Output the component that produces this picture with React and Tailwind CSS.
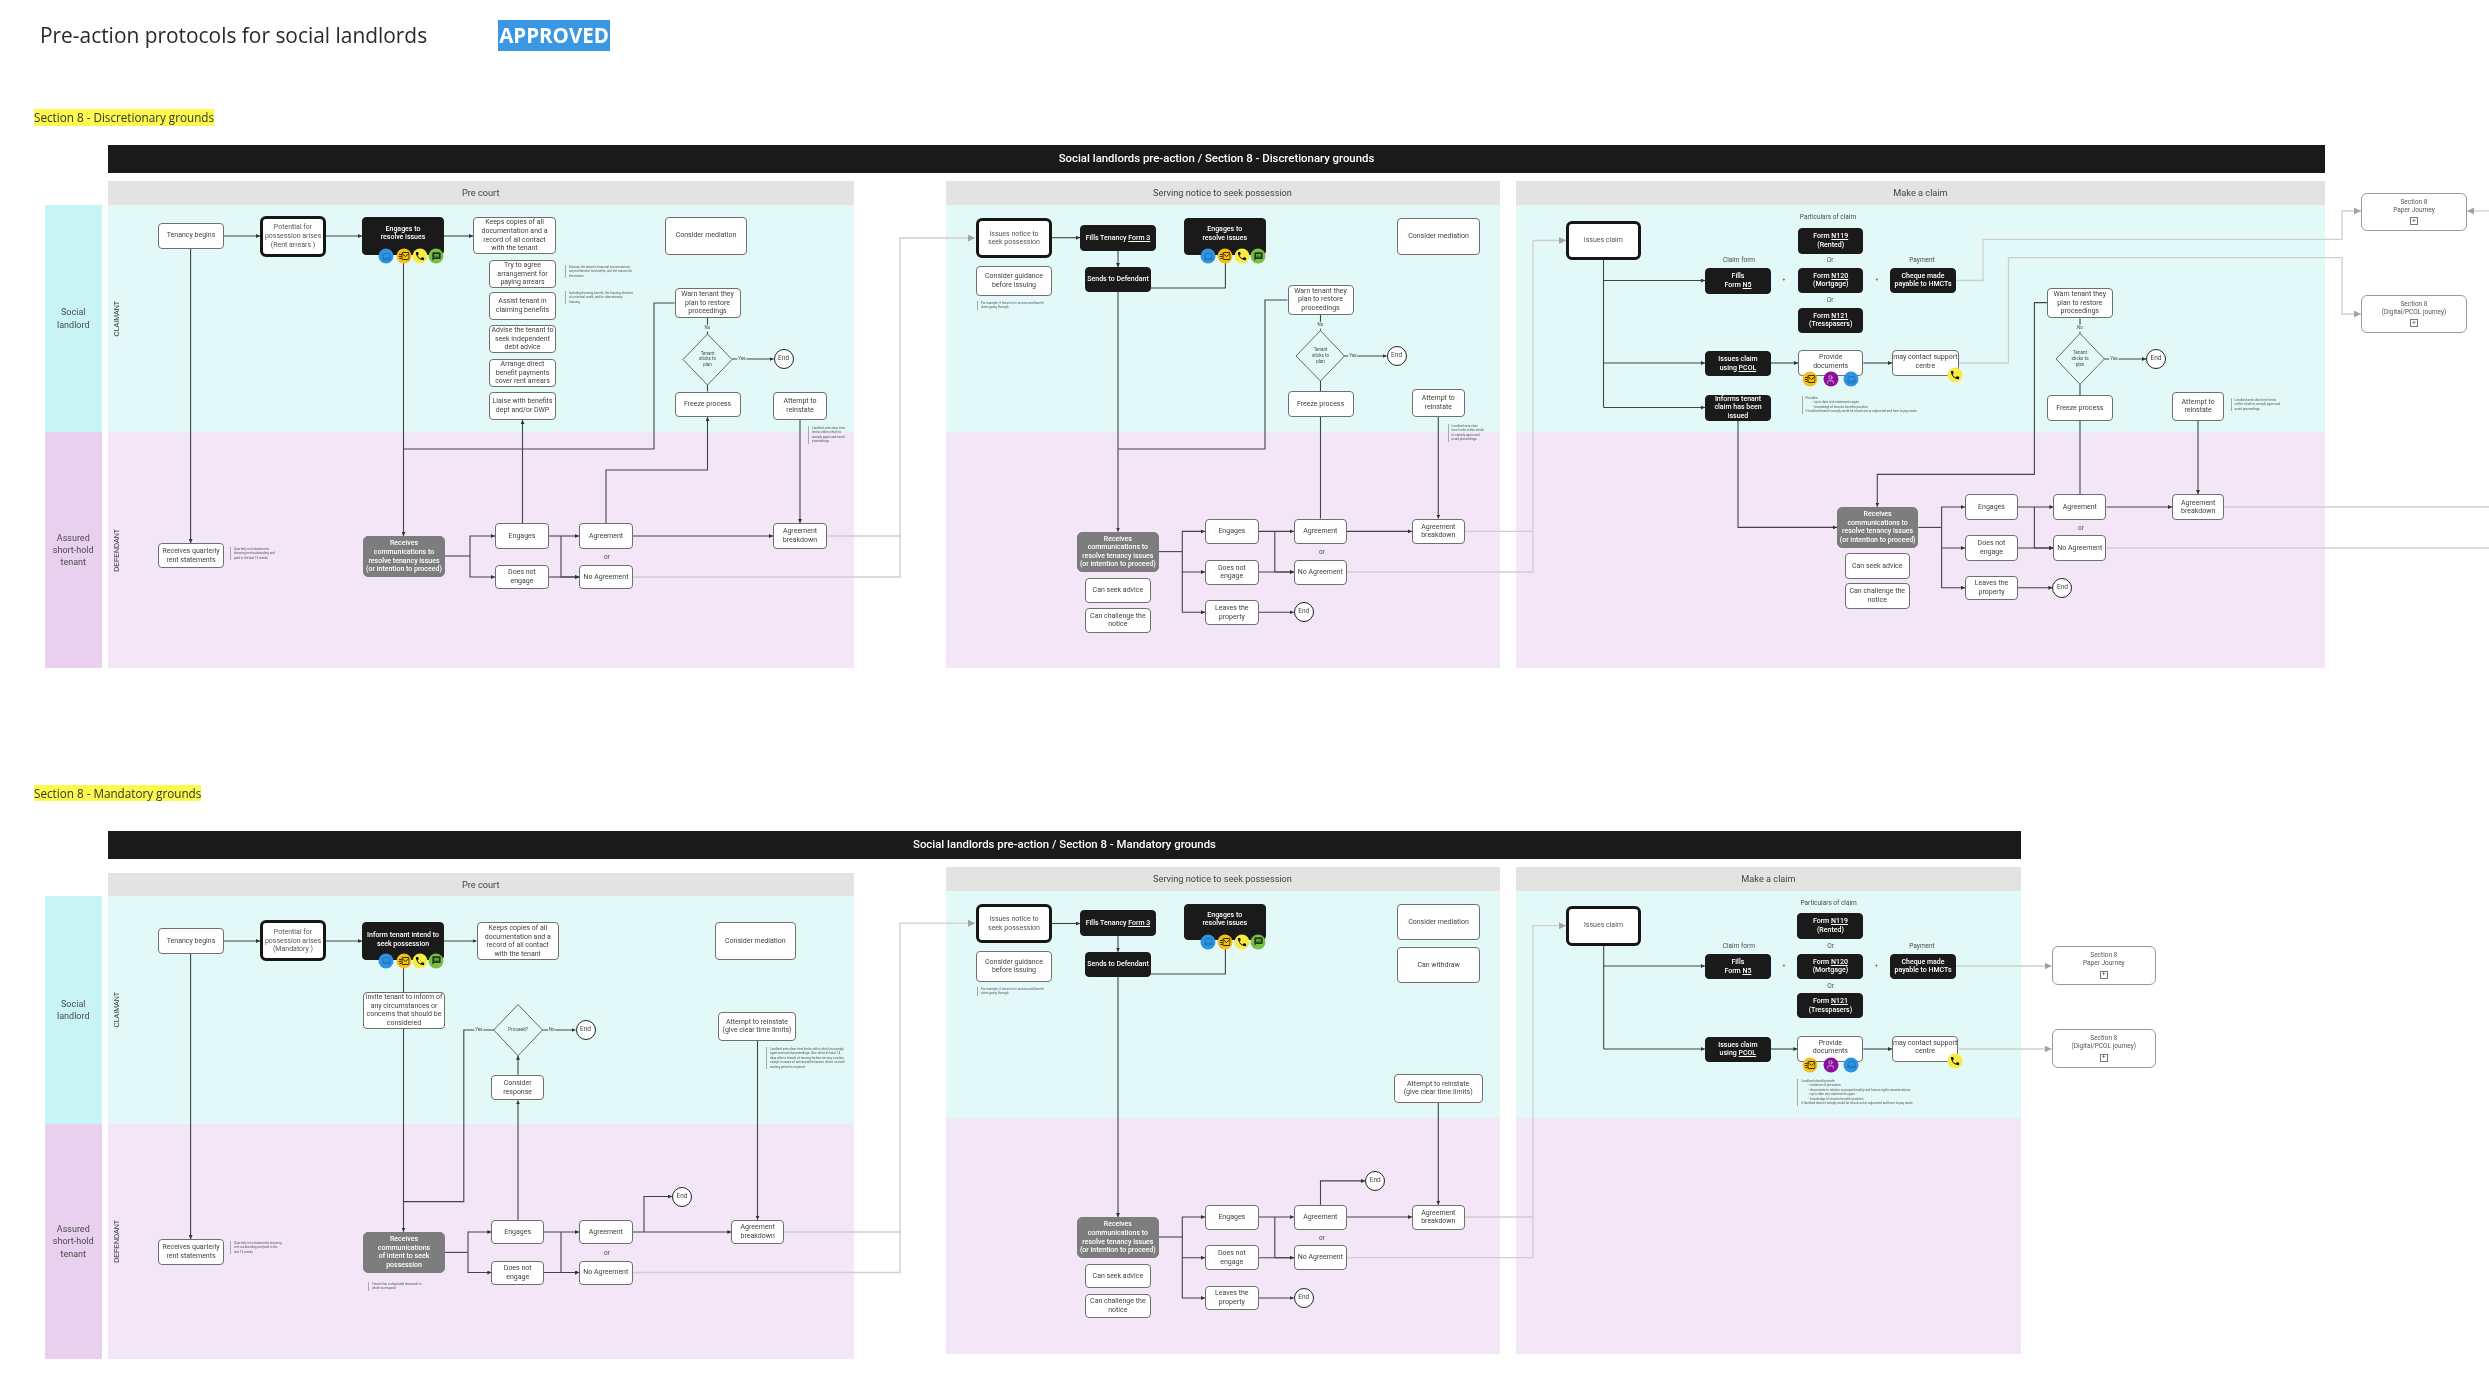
import React from "react";
import { Laptop, User } from "lucide-react";
import { MdMessage, MdPhone } from "react-icons/md";

const VARIANTS = {
  plain: "bg-white border border-[#6f6f6f] rounded-[4px] text-[#3f3f3f]",
  thick: "bg-white border-[3px] border-[#161616] rounded-[6px] text-[#555555]",
  dark: "bg-[#1a1a1a] border border-[#1a1a1a] rounded-[4px] text-white font-medium",
  grey: "bg-[#7d7d7d] border border-[#7d7d7d] rounded-[5px] text-white font-medium",
  soft: "bg-white border border-[#9a9a9a] rounded-[6px] text-[#555555]",
};

// x / y / r / b are page coordinates of the box edges
const Node = ({ x, y, r, b, v = "plain", size = "text-[7px]", children }) => (
  <div
    className={`absolute flex items-center justify-center text-center leading-[1.22] ${size} ${VARIANTS[v]}`}
    style={{ left: x, top: y, width: r - x, height: b - y }}
  >
    <span>{children}</span>
  </div>
);

const Label = ({ x, y, size = "text-[6.5px]", bg = "", children }) => (
  <span
    className={`absolute -translate-x-1/2 -translate-y-1/2 whitespace-nowrap px-px text-center text-[#4a4a4a] ${size} ${bg}`}
    style={{ left: x, top: y }}
  >
    {children}
  </span>
);

const End = ({ x, y }) => (
  <div
    className="absolute flex items-center justify-center w-[20px] h-[20px] -translate-x-1/2 -translate-y-1/2 rounded-full bg-white border-[1.5px] border-[#222222] text-[6.5px] text-[#444444]"
    style={{ left: x, top: y }}
  >
    End
  </div>
);

const Note = ({ x, y, r, children }) => (
  <div
    className="absolute border-l border-[#a8a8a8] pl-[3px] text-[3.1px] leading-[1.45] text-[#555555]"
    style={{ left: x, top: y, width: r - x }}
  >
    {children}
  </div>
);

const Dot = ({ x, y, bg, children }) => (
  <div
    className={`absolute flex items-center justify-center w-[15px] h-[15px] -translate-x-1/2 -translate-y-1/2 rounded-full ${bg}`}
    style={{ left: x, top: y }}
  >
    {children}
  </div>
);

const MailGlyph = () => (
  <svg width="11" height="9" viewBox="0 0 22 18" fill="none" stroke="#3a3000" strokeWidth="2">
    <rect x="7" y="2" width="14" height="14" rx="1" />
    <path d="M7 4l7 6 7-6M1 6h5M0 10h6M2 14h4" />
  </svg>
);

const Blue = ({ x, y }) => (
  <Dot x={x} y={y} bg="bg-[#2f94e4]">
    <Laptop size={10} color="#1c6aa8" strokeWidth={1.8} />
  </Dot>
);
const Mail = ({ x, y }) => (
  <Dot x={x} y={y} bg="bg-[#f4bf16]">
    <MailGlyph />
  </Dot>
);
const Call = ({ x, y }) => (
  <Dot x={x} y={y} bg="bg-[#f8ec42]">
    <MdPhone size={11} color="#111111" />
  </Dot>
);
const Chat = ({ x, y }) => (
  <Dot x={x} y={y} bg="bg-[#79bf45]">
    <MdMessage size={10} color="#1d3a14" />
  </Dot>
);
const Person = ({ x, y }) => (
  <Dot x={x} y={y} bg="bg-[#8b0f9f]">
    <User size={10} color="#e7c6ee" strokeWidth={1.8} />
  </Dot>
);

const Contacts = ({ xs, y }) => (
  <>
    <Blue x={xs[0]} y={y} />
    <Mail x={xs[1]} y={y} />
    <Call x={xs[2]} y={y} />
    <Chat x={xs[3]} y={y} />
  </>
);

const U = ({ children }) => <span className="underline">{children}</span>;

const Sticks = ({ x, y }) => (
  <Label x={x} y={y} size="text-[4.5px] leading-[1.3]">Tenant<br />sticks to<br />plan</Label>
);

const arrows = [
  "224,236 260,236", "326,236 362,236", "444,236 473,236", "190.6,248.5 190.6,543", "403.5,262 403.5,536",
  "522.5,523 522.5,420", "606,523 606,470 707.5,470 707.5,417", "800,420 800,523", "732,359 773.6,359",
  "470,556 470,536 495,536", "470,556 470,577 495,577", "549,536 579,536", "561,536 561,577 579,577",
  "549,577 579,577", "633,536 773,536",
  "1052,237.7 1080,237.7", "1118,250.7 1118,267", "1118,292 1118,531.6", "1344.5,356 1386.6,356",
  "1438.3,417 1438.3,518.6", "1182.3,551.6 1182.3,531.4 1205,531.4", "1182.3,551.6 1182.3,572 1205,572",
  "1182.3,572 1182.3,612.3 1205,612.3", "1258.6,531.4 1293.8,531.4", "1274.8,531.4 1274.8,572 1293.8,572",
  "1258.6,572 1293.8,572", "1258.6,612.3 1293.7,612.3", "1346.8,531.4 1412,531.4",
  "1603.5,280.5 1705,280.5", "1603.5,363 1705,363", "1603.5,407.5 1705,407.5", "1771,363 1798,363",
  "1863.4,363 1892,363", "1738,420.5 1738,527.4 1837,527.4", "1941.6,527.4 1941.6,507 1965,507",
  "1941.6,527.4 1941.6,548 1965,548", "1941.6,548 1941.6,587.7 1965,587.7", "2018,507 2053.3,507",
  "2034.4,507 2034.4,548 2053.3,548", "2018,548 2053.3,548", "2018,587.7 2052.4,587.7", "2106.3,507 2172,507",
  "2047,302.6 2034.4,302.6 2034.4,474.4 1877.3,474.4 1877.3,506.7", "2104.4,359 2146,359", "2198,420.8 2198,494",

  "224,941 260,941", "326,941 362,941", "444,941 476.5,941", "190.6,954 190.6,1239", "403.5,1029 403.5,1231.8",
  "542.5,1030 575.5,1030", "518,1074.8 518,1055.8", "518,1219.8 518,1100.4", "644,1232 644,1196.5 672,1196.5",
  "632.6,1232 731.3,1232", "757.5,1040.6 757.5,1219.8", "468,1252.4 468,1232 491.4,1232",
  "468,1252.4 468,1272.5 491.4,1272.5", "544,1232 579,1232", "561,1232 561,1272.5 579,1272.5", "544,1272.5 579,1272.5",
  "1052,923.5 1080,923.5", "1118,936 1118,951.7", "1118,977 1118,1217", "1320.5,1204.7 1320.5,1180.9 1365,1180.9",
  "1438.3,1102.6 1438.3,1204.7", "1182.3,1237 1182.3,1217 1205,1217", "1182.3,1237 1182.3,1257.7 1205,1257.7",
  "1182.3,1257.7 1182.3,1298 1205,1298", "1258.6,1217 1293.8,1217", "1274.8,1217 1274.8,1257.7 1293.8,1257.7",
  "1258.6,1257.7 1293.8,1257.7", "1258.6,1298 1293.7,1298", "1346.8,1217 1412,1217",
  "1603.7,966 1704.8,966", "1603.7,1049 1704.8,1049", "1771,1049 1797.4,1049", "1863.4,1049 1892,1049",
];

const plain = [
  "445,556 470,556", "403.5,449 654,449 654,303 674.5,303", "707.5,318 707.5,334", "707.5,385 707.5,391.5",
  "1151,288 1225.4,288 1225.4,262", "1118,449 1265,449 1265,300 1287.5,300", "1320.5,314.5 1320.5,330.6",
  "1320.5,381 1320.5,391", "1320.5,417 1320.5,518.6", "1159,551.6 1182.3,551.6",
  "1603.5,260 1603.5,407.5", "1918.3,527.4 1941.6,527.4", "2080,318.4 2080,333.4", "2080,384.3 2080,395", "2080,421 2080,494",
  "403.5,965 403.5,992", "403.5,1201.6 463.8,1201.6 463.8,1030 493.7,1030", "445,1252.4 468,1252.4",
  "1151,974 1225.4,974 1225.4,947", "1159,1237 1182.3,1237", "1603.7,945.6 1603.7,1049",
];

const lightArrows = [
  "633,577 900,577 900,238 975,238", "1346.8,572 1533,572 1533,240.5 1566,240.5",
  "1956,280.5 1983,280.5 1983,239.4 2342,239.4 2342,211 2361,211",
  "1958.7,363 2008.5,363 2008.5,257.7 2342,257.7 2342,314 2361,314", "2489,211 2467,211",
  "632.6,1272.5 900,1272.5 900,923.2 975,923.2", "1346.8,1257.7 1533,1257.7 1533,925.7 1566,925.7",
  "1956,966 2051.6,966", "1958.3,1049 2051.6,1049",
];

const lightPlain = [
  "827,536 900,536", "1464.6,531.4 1533,531.4", "2224.3,507 2489,507", "2106.3,548 2489,548",
  "784,1232 900,1232", "1464.6,1217 1533,1217",
];

const diamonds = ["707.5,334 732,359.5 707.5,385 683,359.5", "1320.5,330.6 1344.5,356 1320.5,381 1296,356",
  "2080,333.4 2104.4,359 2080,384.3 2056,359", "518,1004.6 542.5,1030 518,1055.8 493.7,1030"];

const Connectors = () => (
  <svg className="absolute inset-0" width="2489" height="1378" fill="none">
    <defs>
      <marker id="tip" viewBox="0 0 6 6" refX="6" refY="3" markerWidth="4" markerHeight="4" markerUnits="userSpaceOnUse" orient="auto">
        <path d="M0 0L6 3L0 6z" fill="#333333" />
      </marker>
      <marker id="tipLight" viewBox="0 0 6 6" refX="6" refY="3" markerWidth="7" markerHeight="7" markerUnits="userSpaceOnUse" orient="auto">
        <path d="M0 0L6 3L0 6z" fill="#a3a3a3" />
      </marker>
    </defs>
    {lightPlain.map((p) => <polyline key={p} points={p} stroke="#cfcfcf" strokeWidth="1.3" />)}
    {lightArrows.map((p) => <polyline key={p} points={p} stroke="#cfcfcf" strokeWidth="1.3" markerEnd="url(#tipLight)" />)}
    {plain.map((p) => <polyline key={p} points={p} stroke="#444444" strokeWidth="1.1" />)}
    {arrows.map((p) => <polyline key={p} points={p} stroke="#444444" strokeWidth="1.1" markerEnd="url(#tip)" />)}
    {diamonds.map((p) => <polygon key={p} points={p} stroke="#555555" strokeWidth="0.9" />)}
  </svg>
);

const Panel = ({ className, head, title, top, bottom }) => (
  <div className={className}>
    <div className={`flex items-center justify-center bg-[#e3e3e3] text-[9.2px] text-[#444444] ${head}`}>{title}</div>
    <div className={`bg-[#e3f9f8] ${top}`} />
    <div className={`bg-[#f3e6f6] ${bottom}`} />
  </div>
);

const Strip = ({ top, bottom }) => (
  <div className="flex flex-col w-[18.5px] mr-[-18.5px] z-10 text-[7px] text-[#3a3a3a] font-['Liberation_Sans',sans-serif]">
    <div className={`flex items-center justify-center bg-[#bff0f0] ${top}`}>
      <span className="[writing-mode:vertical-rl] rotate-180">CLAIMANT</span>
    </div>
    <div className={`flex items-center justify-center bg-[#e0bde8] ${bottom}`}>
      <span className="[writing-mode:vertical-rl] rotate-180">DEFENDANT</span>
    </div>
  </div>
);

const Side = ({ top, bottom, offset }) => (
  <div className={`flex flex-col w-[56.5px] mr-[6px] text-center text-[9px] leading-[1.35] text-[#4a4a4a] ${offset}`}>
    <div className={`flex items-center justify-center bg-[#c9f4f5] ${top}`}>Social<br />landlord</div>
    <div className={`flex items-center justify-center bg-[#e9d0ee] ${bottom}`}>Assured<br />short-hold<br />tenant</div>
  </div>
);

const Journey = ({ x, y, r, b, top }) => (
  <Node x={x} y={y} r={r} b={b} v="soft" size="text-[6.5px]">
    Section 8<br />{top}
    <span className="flex items-center justify-center w-[8px] h-[8px] mx-auto mt-[3px] border border-[#777777] text-[7px] leading-none">+</span>
  </Node>
);

const SectionOne = () => (
  <>
    <Node x={158} y={223} r={224} b={248.5}>Tenancy begins</Node>
    <Node x={260} y={215.5} r={326} b={257} v="thick">Potential for<br />possession arises<br />(Rent arrears )</Node>
    <Node x={362} y={217} r={444} b={254.5} v="dark" size="text-[7px] pb-[5px]">Engages to<br />resolve issues</Node>
    <Contacts xs={[386, 403.5, 420, 436]} y={256} />
    <Node x={473} y={217} r={556} b={254}>Keeps copies of all<br />documentation and a<br />record of all contact<br />with the tenant</Node>
    <Node x={489} y={260} r={556} b={288}>Try to agree<br />arrangement for<br />paying arrears</Node>
    <Node x={489} y={292} r={556} b={320}>Assist tenant in<br />claiming benefits</Node>
    <Node x={489} y={325} r={556} b={353}>Advise the tenant to<br />seek independent<br />debt advice</Node>
    <Node x={489} y={359} r={556} b={387}>Arrange direct<br />benefit payments<br />cover rent arrears</Node>
    <Node x={489} y={392} r={556} b={420}>Liaise with benefits<br />dept and/or DWP</Node>
    <Note x={565} y={265} r={634}>Discuss the tenant's financial circumstances, any entitlement to benefits, and the reason for the arrears.</Note>
    <Note x={565} y={291} r={634}>Including housing benefit, the housing element of universal credit, and/or discretionary housing</Note>
    <Node x={665} y={217} r={747} b={254.5}>Consider mediation</Node>
    <Node x={674.5} y={288} r={740.5} b={318}>Warn tenant they<br />plan to restore<br />proceedings</Node>
    <Label x={707.5} y={328} size="text-[4.5px]" bg="bg-[#e3f9f8]">No</Label>
    <Sticks x={707.5} y={359.5} />
    <Label x={742} y={359} size="text-[4.5px]" bg="bg-[#e3f9f8]">Yes</Label>
    <End x={783.6} y={359} />
    <Node x={674.5} y={391.5} r={740.5} b={417}>Freeze process</Node>
    <Node x={773} y={391.5} r={827} b={420}>Attempt to<br />reinstate</Node>
    <Note x={808} y={426} r={851}>Landlord sets clear time limits within which to comply again and avoid proceedings.</Note>
    <Node x={158} y={543} r={224} b={568}>Receives quarterly<br />rent statements</Node>
    <Note x={230} y={547} r={281}>Quarterly rent statements showing rent outstanding and paid in the last 13 weeks</Note>
    <Node x={363} y={536} r={445} b={577} v="grey">Receives<br />communications to<br />resolve tenancy issues<br />(or intention to proceed)</Node>
    <Node x={495} y={523} r={549} b={549}>Engages</Node>
    <Node x={495} y={565} r={549} b={589}>Does not<br />engage</Node>
    <Node x={579} y={523} r={633} b={549}>Agreement</Node>
    <Label x={607} y={558}>or</Label>
    <Node x={579} y={565} r={633} b={589}>No Agreement</Node>
    <Node x={773} y={523} r={827} b={549}>Agreement<br />breakdown</Node>

    <Node x={976} y={218.4} r={1052} b={257.7} v="thick">Issues notice to<br />seek possession</Node>
    <Node x={976} y={266} r={1052} b={296}>Consider guidance<br />before issuing</Node>
    <Note x={977} y={301} r={1044}>For example, if tenant is in arrears and benefit claim going through</Note>
    <Node x={1080} y={225} r={1156} b={250.7} v="dark">Fills Tenancy <U>Form 3</U></Node>
    <Node x={1085} y={267} r={1151} b={292} v="dark">Sends to Defendant</Node>
    <Node x={1183.5} y={218} r={1266} b={255} v="dark" size="text-[7px] pb-[5px]">Engages to<br />resolve issues</Node>
    <Contacts xs={[1208, 1225.4, 1242, 1258]} y={256} />
    <Node x={1397.4} y={218} r={1479.7} b={255}>Consider mediation</Node>
    <Node x={1287.5} y={285} r={1353.5} b={314.5}>Warn tenant they<br />plan to restore<br />proceedings</Node>
    <Label x={1320.5} y={325} size="text-[4.5px]" bg="bg-[#e3f9f8]">No</Label>
    <Sticks x={1320.5} y={356} />
    <Label x={1353} y={356} size="text-[4.5px]" bg="bg-[#e3f9f8]">Yes</Label>
    <End x={1396.6} y={355.5} />
    <Node x={1287.5} y={391} r={1353.5} b={417}>Freeze process</Node>
    <Node x={1412} y={389} r={1464.6} b={417}>Attempt to<br />reinstate</Node>
    <Note x={1447.6} y={424} r={1484}>Landlord sets clear time limits within which to comply again and avoid proceedings.</Note>
    <Node x={1076.7} y={531.6} r={1159} b={572.3} v="grey">Receives<br />communications to<br />resolve tenancy issues<br />(or intention to proceed)</Node>
    <Node x={1084.7} y={577.6} r={1151} b={603}>Can seek advice</Node>
    <Node x={1084.7} y={607.7} r={1151} b={633.3}>Can challenge the<br />notice</Node>
    <Node x={1205} y={518.6} r={1258.6} b={544.2}>Engages</Node>
    <Node x={1205} y={559.7} r={1258.6} b={584.6}>Does not<br />engage</Node>
    <Node x={1205} y={600} r={1258.6} b={625}>Leaves the<br />property</Node>
    <Node x={1293.8} y={518.6} r={1346.8} b={544.2}>Agreement</Node>
    <Label x={1322} y={553}>or</Label>
    <Node x={1293.8} y={559.7} r={1346.8} b={584.6}>No Agreement</Node>
    <End x={1303.7} y={612.3} />
    <Node x={1412} y={518.6} r={1464.6} b={544.2}>Agreement<br />breakdown</Node>

    <Node x={1566} y={220.5} r={1640.7} b={260} v="thick">Issues claim</Node>
    <Label x={1828} y={218}>Particulars of claim</Label>
    <Node x={1798} y={228} r={1863.4} b={253.5} v="dark">Form <U>N119</U><br />(Rented)</Node>
    <Label x={1830} y={261}>Or</Label>
    <Node x={1798} y={267.5} r={1863.4} b={293} v="dark">Form <U>N120</U><br />(Mortgage)</Node>
    <Label x={1830} y={301}>Or</Label>
    <Node x={1798} y={307.5} r={1863.4} b={332.7} v="dark">Form <U>N121</U><br />(Tresspasers)</Node>
    <Label x={1739} y={261}>Claim form</Label>
    <Node x={1705} y={268} r={1771} b={294} v="dark">Fills<br />Form <U>N5</U></Node>
    <Label x={1784} y={280} size="text-[5px]">+</Label>
    <Label x={1877} y={280} size="text-[5px]">+</Label>
    <Label x={1922} y={261}>Payment</Label>
    <Node x={1890} y={267.5} r={1956} b={293} v="dark">Cheque made<br />payable to HMCTs</Node>
    <Node x={1705} y={351} r={1771} b={376} v="dark">Issues claim<br />using <U>PCOL</U></Node>
    <Node x={1798} y={350} r={1863.4} b={376} size="text-[7px] pb-[3px]">Provide<br />documents</Node>
    <Mail x={1810} y={379} />
    <Person x={1830.7} y={379} />
    <Blue x={1851.4} y={379} />
    <Node x={1892} y={350} r={1958.7} b={376} size="text-[7px] pb-[3px] whitespace-nowrap">may contact support<br />centre</Node>
    <Call x={1954.5} y={375} />
    <Node x={1705} y={395} r={1771} b={420.5} v="dark">Informs tenant<br />claim has been<br />issued</Node>
    <Note x={1801.6} y={396} r={1942}>
      Provides:
      <div className="pl-[7px]">• up to date rent statements again</div>
      <div className="pl-[7px]">• knowledge of tenants benefits position</div>
      If landlord doesn't comply could be struck out or adjourned and have to pay costs
    </Note>
    <Node x={2047} y={288} r={2112.6} b={318.4}>Warn tenant they<br />plan to restore<br />proceedings</Node>
    <Label x={2080} y={328} size="text-[4.5px]" bg="bg-[#e3f9f8]">No</Label>
    <Sticks x={2080} y={359} />
    <Label x={2114} y={359} size="text-[4.5px]" bg="bg-[#e3f9f8]">Yes</Label>
    <End x={2156} y={359} />
    <Node x={2047} y={395} r={2112.6} b={421}>Freeze process</Node>
    <Node x={2172} y={391.7} r={2224.3} b={420.8}>Attempt to<br />reinstate</Node>
    <Note x={2230.6} y={398} r={2284}>Landlord sets clear time limits within which to comply again and avoid proceedings.</Note>
    <Node x={1837} y={506.7} r={1918.3} b={548} v="grey">Receives<br />communications to<br />resolve tenancy issues<br />(or intention to proceed)</Node>
    <Node x={1844.5} y={553.4} r={1910} b={579}>Can seek advice</Node>
    <Node x={1844.5} y={583} r={1910} b={609}>Can challenge the<br />notice</Node>
    <Node x={1965} y={494} r={2018} b={520.4}>Engages</Node>
    <Node x={1965} y={535} r={2018} b={560.7}>Does not<br />engage</Node>
    <Node x={1965} y={575.5} r={2018} b={600.4}>Leaves the<br />property</Node>
    <Node x={2053.3} y={494} r={2106.3} b={520.4}>Agreement</Node>
    <Label x={2081} y={529}>or</Label>
    <Node x={2053.3} y={535} r={2106.3} b={560.7}>No Agreement</Node>
    <End x={2062.4} y={587.7} />
    <Node x={2172} y={494} r={2224.3} b={520.4}>Agreement<br />breakdown</Node>
    <Journey x={2361} y={193} r={2467} b={231} top="Paper Journey" />
    <Journey x={2361} y={295} r={2467} b={333} top="(Digital/PCOL journey)" />
  </>
);

const SectionTwo = () => (
  <>
    <Node x={158} y={928} r={224} b={954}>Tenancy begins</Node>
    <Node x={260} y={920.4} r={326} b={961.5} v="thick">Potential for<br />possession arises<br />(Mandatory )</Node>
    <Node x={362} y={922.4} r={444} b={960} v="dark" size="text-[7px] pb-[3px]">Inform tenant intend to<br />seek possession</Node>
    <Contacts xs={[386, 403.5, 420, 436]} y={960.8} />
    <Node x={476.5} y={922.4} r={559} b={960}>Keeps copies of all<br />documentation and a<br />record of all contact<br />with the tenant</Node>
    <Node x={714.7} y={922.4} r={796} b={960}>Consider mediation</Node>
    <Node x={363} y={991.8} r={445} b={1029}>Invite tenant to inform of<br />any circumstances or<br />concerns that should be<br />considered</Node>
    <Label x={518} y={1030} size="text-[4.8px]">Proceed?</Label>
    <Label x={479} y={1030} size="text-[4.5px]" bg="bg-[#e3f9f8]">Yes</Label>
    <Label x={551.7} y={1030} size="text-[4.5px]" bg="bg-[#e3f9f8]">No</Label>
    <End x={585.5} y={1030} />
    <Node x={491.4} y={1074.8} r={544} b={1100.4}>Consider<br />response</Node>
    <Node x={718} y={1012.3} r={796} b={1040.6}>Attempt to reinstate<br />(give clear time limits)</Node>
    <Note x={766} y={1047} r={846}>Landlord sets clear time limits within which to comply again and avoid proceedings. Give allow at least 14 days after a breach of tenancy before serving a notice, except in cases of anti-social behaviour where no such waiting period is required.</Note>
    <Node x={158} y={1239} r={224} b={1264.8}>Receives quarterly<br />rent statements</Node>
    <Note x={230} y={1241} r={283}>Quarterly rent statements showing rent outstanding and paid in the last 13 weeks</Note>
    <Node x={363} y={1231.8} r={445} b={1273} v="grey">Receives<br />communications<br />of intent to seek<br />possession</Node>
    <Note x={368} y={1282} r={428}>Tenant has a stipulated timescale in which to respond</Note>
    <Node x={491.4} y={1219.8} r={544} b={1244.2}>Engages</Node>
    <Node x={491.4} y={1260.5} r={544} b={1285}>Does not<br />engage</Node>
    <Node x={579} y={1219.8} r={632.6} b={1244.2}>Agreement</Node>
    <Label x={607} y={1253.5}>or</Label>
    <Node x={579} y={1260.5} r={632.6} b={1285}>No Agreement</Node>
    <End x={682} y={1196.5} />
    <Node x={731.3} y={1219.8} r={784} b={1244.2}>Agreement<br />breakdown</Node>

    <Node x={976} y={903.6} r={1052} b={943.5} v="thick">Issues notice to<br />seek possession</Node>
    <Node x={976} y={951.3} r={1052} b={981.6}>Consider guidance<br />before issuing</Node>
    <Note x={977} y={987} r={1044}>For example, if tenant is in arrears and benefit claim going through</Note>
    <Node x={1080} y={910.4} r={1156} b={936} v="dark">Fills Tenancy <U>Form 3</U></Node>
    <Node x={1085} y={951.7} r={1151} b={977} v="dark">Sends to Defendant</Node>
    <Node x={1183.5} y={903.6} r={1266} b={940.3} v="dark" size="text-[7px] pb-[5px]">Engages to<br />resolve issues</Node>
    <Contacts xs={[1208, 1225.4, 1242, 1258]} y={941.7} />
    <Node x={1397.4} y={903.6} r={1479.7} b={940.3}>Consider mediation</Node>
    <Node x={1397.4} y={946.7} r={1479.7} b={983.3}>Can withdraw</Node>
    <Node x={1393.5} y={1074.4} r={1482.8} b={1102.6}>Attempt to reinstate<br />(give clear time limits)</Node>
    <End x={1375.3} y={1180.9} />
    <Node x={1076.7} y={1217} r={1159} b={1258} v="grey">Receives<br />communications to<br />resolve tenancy issues<br />(or intention to proceed)</Node>
    <Node x={1084.7} y={1263.8} r={1151} b={1288.3}>Can seek advice</Node>
    <Node x={1084.7} y={1293.7} r={1151} b={1318}>Can challenge the<br />notice</Node>
    <Node x={1205} y={1204.7} r={1258.6} b={1229.6}>Engages</Node>
    <Node x={1205} y={1245.3} r={1258.6} b={1270}>Does not<br />engage</Node>
    <Node x={1205} y={1285.5} r={1258.6} b={1310.4}>Leaves the<br />property</Node>
    <Node x={1293.8} y={1204.7} r={1346.8} b={1229.6}>Agreement</Node>
    <Label x={1322} y={1239}>or</Label>
    <Node x={1293.8} y={1245.3} r={1346.8} b={1270}>No Agreement</Node>
    <End x={1303.7} y={1297.6} />
    <Node x={1412} y={1204.7} r={1464.6} b={1229.6}>Agreement<br />breakdown</Node>

    <Node x={1566} y={905.8} r={1641} b={945.6} v="thick">Issues claim</Node>
    <Label x={1828.6} y={903.6}>Particulars of claim</Label>
    <Node x={1797.4} y={913} r={1863.4} b={939} v="dark">Form <U>N119</U><br />(Rented)</Node>
    <Label x={1830.6} y={946.7}>Or</Label>
    <Node x={1797.4} y={953.5} r={1863.4} b={978.7} v="dark">Form <U>N120</U><br />(Mortgage)</Node>
    <Label x={1830.6} y={986.5}>Or</Label>
    <Node x={1797.4} y={993} r={1863.4} b={1018} v="dark">Form <U>N121</U><br />(Tresspasers)</Node>
    <Label x={1738.8} y={946.7}>Claim form</Label>
    <Node x={1704.8} y={953.8} r={1771} b={979.4} v="dark">Fills<br />Form <U>N5</U></Node>
    <Label x={1784} y={966} size="text-[5px]">+</Label>
    <Label x={1876.4} y={966} size="text-[5px]">+</Label>
    <Label x={1922} y={946.7}>Payment</Label>
    <Node x={1890} y={953.5} r={1956} b={978.7} v="dark">Cheque made<br />payable to HMCTs</Node>
    <Node x={1704.8} y={1036.7} r={1771} b={1062.3} v="dark">Issues claim<br />using <U>PCOL</U></Node>
    <Node x={1797.4} y={1035.7} r={1863.4} b={1061.6} size="text-[7px] pb-[3px]">Provide<br />documents</Node>
    <Mail x={1809.6} y={1064.8} />
    <Person x={1830.6} y={1064.8} />
    <Blue x={1851} y={1064.8} />
    <Node x={1892} y={1035.7} r={1958.3} b={1061.6} size="text-[7px] pb-[3px] whitespace-nowrap">may contact support<br />centre</Node>
    <Call x={1954.7} y={1060.6} />
    <Note x={1797.4} y={1079} r={1940}>
      Landlord should provide:
      <div className="pl-[7px]">• evidence of pre-action</div>
      <div className="pl-[7px]">• documents in relation to proportionality and human rights considerations</div>
      <div className="pl-[7px]">• up to date rent statements again</div>
      <div className="pl-[7px]">• knowledge of tenants benefits position</div>
      If landlord doesn't comply could be struck out or adjourned and have to pay costs
    </Note>
    <Journey x={2051.6} y={946.3} r={2156} b={984.8} top="Paper Journey" />
    <Journey x={2051.6} y={1029.3} r={2156} b={1067.7} top="(Digital/PCOL journey)" />
  </>
);

const App = () => {
  return (
    <div className="relative w-[2489px] h-[1378px] overflow-hidden bg-white blur-[0.35px] font-['Roboto',sans-serif]">
      <div className="flex items-center h-[31px] pl-[40px] mt-[20px] font-['Open_Sans',sans-serif]">
        <h1 className="w-[458px] text-[20.9px] text-[#2a2a2a]">Pre-action protocols for social landlords</h1>
        <span className="flex items-center justify-center w-[112px] h-[31px] bg-[#3a97e4] text-[20.5px] font-bold text-white">APPROVED</span>
      </div>

      <div className="w-fit h-[17px] mt-[58px] ml-[34px] bg-[#fdf94d] text-[11.7px] leading-[17px] text-[#333333] font-['Open_Sans',sans-serif]">Section 8 - Discretionary grounds</div>
      <div className="flex items-center justify-center w-[2217px] h-[28px] mt-[19px] ml-[108px] bg-[#1a1a1a] text-[11.4px] font-medium text-white">Social landlords pre-action / Section 8 - Discretionary grounds</div>
      <div className="flex mt-[8px] ml-[45px]">
        <Side top="h-[227px]" bottom="h-[236px]" offset="mt-[24px]" />
        <div className="mt-[24px]"><Strip top="h-[227px]" bottom="h-[236px]" /></div>
        <Panel className="w-[746.5px]" head="h-[24px]" title="Pre court" top="h-[227px]" bottom="h-[236px]" />
        <Panel className="w-[554px] ml-[91.5px]" head="h-[24px]" title="Serving notice to seek possession" top="h-[227px]" bottom="h-[236px]" />
        <Panel className="w-[809px] ml-[16.5px]" head="h-[24px]" title="Make a claim" top="h-[227px]" bottom="h-[236px]" />
      </div>

      <div className="w-fit h-[16px] mt-[117px] ml-[34px] bg-[#fdf94d] text-[11.7px] leading-[16px] text-[#333333] font-['Open_Sans',sans-serif]">Section 8 - Mandatory grounds</div>
      <div className="flex items-center justify-center w-[1913px] h-[28px] mt-[29.5px] ml-[108px] bg-[#1a1a1a] text-[11.4px] font-medium text-white">Social landlords pre-action / Section 8 - Mandatory grounds</div>
      <div className="flex mt-[8.5px] ml-[45px]">
        <Side top="h-[227.2px]" bottom="h-[235.8px]" offset="mt-[29.4px]" />
        <div className="mt-[29.4px]"><Strip top="h-[227.2px]" bottom="h-[235.8px]" /></div>
        <Panel className="w-[746.5px] mt-[5.8px]" head="h-[23.6px]" title="Pre court" top="h-[227.2px]" bottom="h-[235.8px]" />
        <Panel className="w-[554px] ml-[91.5px]" head="h-[24px]" title="Serving notice to seek possession" top="h-[227px]" bottom="h-[236px]" />
        <Panel className="w-[505px] ml-[16.5px]" head="h-[24px]" title="Make a claim" top="h-[227px]" bottom="h-[236px]" />
      </div>

      <div className="absolute inset-0">
        <Connectors />
        <SectionOne />
        <SectionTwo />
      </div>
    </div>
  );
};

export default App;
